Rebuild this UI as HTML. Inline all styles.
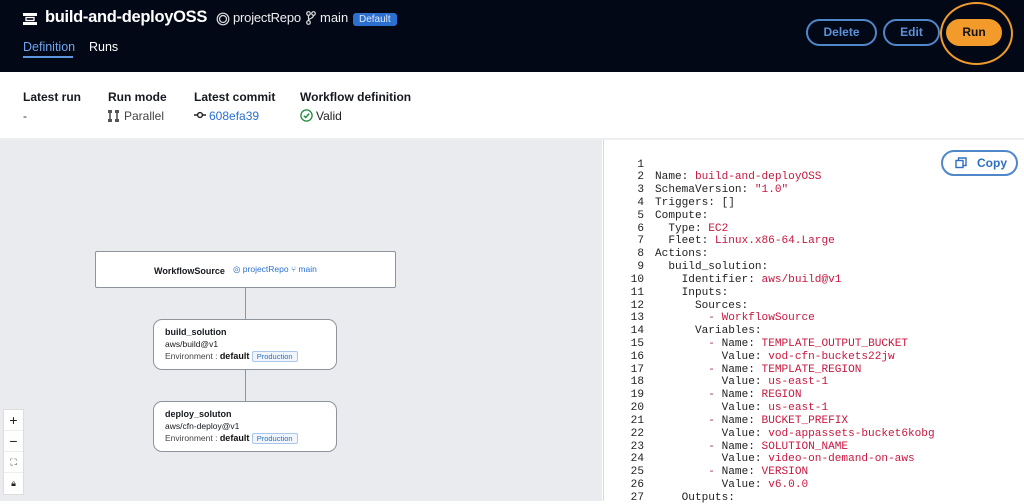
<!DOCTYPE html>
<html><head><meta charset="utf-8"><style>
*{box-sizing:border-box;margin:0;padding:0}
body{width:1024px;height:501px;overflow:hidden;font-family:"Liberation Sans",sans-serif;background:#fff;position:relative;color:#16191f}
.hdr{position:absolute;left:0;top:0;width:1024px;height:72px;background:#030817}
.abs{position:absolute;white-space:nowrap}
.btn{position:absolute;height:27px;border:2px solid #4f87c9;border-radius:14px;color:#5a93d8;font-weight:bold;font-size:12px;text-align:center;line-height:23px}
.lbl{font-weight:bold;font-size:12px}
.val{font-size:12px;color:#333}
.gray{position:absolute;left:0;top:140px;width:602px;height:361px;background:#e9ebee}
.code{position:absolute;left:603px;top:140px;width:421px;height:361px;background:#fff;border-left:1px solid #d5d9dd}
.ln{position:absolute;font-family:"Liberation Mono","Courier New",monospace;font-size:11.1px;white-space:pre;color:#222}
.r{color:#c8173f}.p{color:#9b2a7b}
.node{position:absolute;background:#fff;border:1px solid #8d949c}
.node b{font-size:9px}
.s9{font-size:8.5px}
.tag{display:inline-block;border:1px solid #a9c7ec;background:#f1f6fc;color:#2f6fc0;font-size:7.5px;padding:0 4px;line-height:9px;border-radius:2px;vertical-align:middle}
</style></head><body>
<div class="hdr">
 <svg class="abs" style="left:23px;top:13px" width="14" height="12" viewBox="0 0 14 12"><rect x="0" y="0" width="14" height="3" fill="#fff"/><rect x="0" y="9" width="14" height="3" fill="#fff"/><rect x="3" y="4.5" width="8" height="3" fill="none" stroke="#fff" stroke-width="1.3"/></svg>
 <div class="abs" style="left:45px;top:8px;color:#fff;font-size:16.5px;font-weight:bold;letter-spacing:-0.3px">build-and-deployOSS</div>
 <svg class="abs" style="left:216px;top:12px" width="14" height="14" viewBox="0 0 14 14"><circle cx="7" cy="7" r="5.8" fill="none" stroke="#ddd" stroke-width="1.2"/><circle cx="7" cy="7" r="3.5" fill="none" stroke="#ddd" stroke-width="1.2"/></svg>
 <div class="abs" style="left:233px;top:10px;color:#eee;font-size:13px;letter-spacing:-0.2px">projectRepo</div>
 <svg class="abs" style="left:306px;top:11px" width="10" height="14" viewBox="0 0 10 14"><circle cx="2.5" cy="2.5" r="1.8" fill="none" stroke="#ddd" stroke-width="1.2"/><circle cx="7.5" cy="2.5" r="1.8" fill="none" stroke="#ddd" stroke-width="1.2"/><circle cx="2.5" cy="11.5" r="1.8" fill="none" stroke="#ddd" stroke-width="1.2"/><path d="M2.5 4.3V9.7M7.5 4.3C7.5 8 2.5 7 2.5 9.7" fill="none" stroke="#ddd" stroke-width="1.2"/></svg>
 <div class="abs" style="left:320px;top:10px;color:#eee;font-size:13px">main</div>
 <div class="abs" style="left:353px;top:13px;background:#2c6fcf;color:#dce8f8;font-size:10px;padding:0 6px;line-height:13px;border-radius:3px">Default</div>
 <div class="abs" style="left:23px;top:40px;color:#6ba6ef;font-size:12.5px">Definition</div>
 <div class="abs" style="left:23px;top:56px;width:50px;height:2px;background:#5b97e0"></div>
 <div class="abs" style="left:89px;top:40px;color:#fff;font-size:12.5px">Runs</div>
 <div class="btn" style="left:806px;top:19px;width:71px">Delete</div>
 <div class="btn" style="left:883px;top:19px;width:57px">Edit</div>
 <div class="abs" style="left:940px;top:2px;width:73px;height:63px;border:2px solid #ee9b2c;border-radius:50%"></div>
 <div class="btn" style="left:946px;top:19px;width:56px;background:#f29b2b;border-color:#f29b2b;color:#111">Run</div>
</div>
<div class="abs lbl" style="left:23px;top:90px">Latest run</div>
<div class="abs val" style="left:23px;top:109px">-</div>
<div class="abs lbl" style="left:108px;top:90px">Run mode</div>
<svg class="abs" style="left:108px;top:110px" width="11" height="12" viewBox="0 0 11 12"><rect x="0" y="0" width="4" height="3" fill="#555"/><rect x="7" y="0" width="4" height="3" fill="#555"/><rect x="0" y="9" width="4" height="3" fill="#555"/><rect x="7" y="9" width="4" height="3" fill="#555"/><path d="M2 3V9M9 3V9" stroke="#555" stroke-width="1.6"/></svg>
<div class="abs val" style="left:124px;top:109px;color:#444">Parallel</div>
<div class="abs lbl" style="left:194px;top:90px">Latest commit</div>
<svg class="abs" style="left:194px;top:111px" width="12" height="8" viewBox="0 0 12 8"><circle cx="6" cy="4" r="2.4" fill="none" stroke="#222" stroke-width="1.4"/><path d="M0 4H3.6M8.4 4H12" stroke="#222" stroke-width="1.4"/></svg>
<div class="abs val" style="left:209px;top:109px;color:#2a6fd0">608efa39</div>
<div class="abs lbl" style="left:300px;top:90px">Workflow definition</div>
<svg class="abs" style="left:300px;top:109px" width="13" height="13" viewBox="0 0 13 13"><circle cx="6.5" cy="6.5" r="5.6" fill="none" stroke="#1d8a38" stroke-width="1.3"/><path d="M3.8 6.7L5.7 8.5L9.2 4.6" fill="none" stroke="#1d8a38" stroke-width="1.4"/></svg>
<div class="abs val" style="left:316px;top:109px;color:#222">Valid</div>
<div class="abs" style="left:0;top:138px;width:1024px;height:2px;background:#eceef0"></div>

<div class="gray"></div>
<div class="abs" style="left:245px;top:288px;width:1px;height:120px;background:#8d949c"></div>
<div class="node" style="left:95px;top:251px;width:301px;height:37px;border-radius:2px">
 <b class="abs" style="left:58px;top:14px">WorkflowSource</b>
 <span class="abs s9" style="left:137px;top:12px;color:#2a6fd0">◎ projectRepo ⑂ main</span>
</div>
<div class="node" style="left:153px;top:319px;width:184px;height:51px;border-radius:9px">
 <b class="abs" style="left:11px;top:7px">build_solution</b>
 <span class="abs s9" style="left:11px;top:19px">aws/build@v1</span>
 <span class="abs s9" style="left:11px;top:31px;color:#444">Environment : <b style="color:#111">default</b> <span class="tag">Production</span></span>
</div>
<div class="node" style="left:153px;top:401px;width:184px;height:51px;border-radius:9px">
 <b class="abs" style="left:11px;top:7px">deploy_soluton</b>
 <span class="abs s9" style="left:11px;top:19px">aws/cfn-deploy@v1</span>
 <span class="abs s9" style="left:11px;top:31px;color:#444">Environment : <b style="color:#111">default</b> <span class="tag">Production</span></span>
</div>
<div class="abs" style="left:3px;top:409px;width:21px;height:86px;background:#fefefe;border:1px solid #ddd;font-size:14px;text-align:center;line-height:21px;color:#222">
 <div style="height:21px;border-bottom:1px solid #eee">+</div>
 <div style="height:21px;border-bottom:1px solid #eee">−</div>
 <div style="height:21px;border-bottom:1px solid #eee;font-size:9px">⛶</div>
 <div style="height:21px;font-size:9px">🔒︎</div>
</div>

<div class="code"></div>
<div class="abs" style="left:941px;top:150px;width:77px;height:26px;border:2px solid #4f87c9;border-radius:13px;color:#2f6fc0;font-weight:bold;font-size:12px;line-height:22px;padding-left:34px">Copy</div>
<svg class="abs" style="left:955px;top:157px" width="12" height="12" viewBox="0 0 12 12"><rect x="1" y="3.5" width="7" height="7" fill="none" stroke="#2f6fc0" stroke-width="1.4"/><path d="M3.5 3.5V1H11V8.5H8" fill="none" stroke="#2f6fc0" stroke-width="1.4"/></svg>
<div id="c"></div>
<script>
var L=[
"","Name: <r>build-and-deployOSS</r>","SchemaVersion: <r>\"1.0\"</r>","Triggers: []","Compute:","  Type: <r>EC2</r>","  Fleet: <r>Linux.x86-64.Large</r>","Actions:","  build_solution:","    Identifier: <r>aws/build@v1</r>","    Inputs:","      Sources:","        <p>-</p> <r>WorkflowSource</r>","      Variables:",
"        <p>-</p> Name: <r>TEMPLATE_OUTPUT_BUCKET</r>","          Value: <r>vod-cfn-buckets22jw</r>",
"        <p>-</p> Name: <r>TEMPLATE_REGION</r>","          Value: <r>us-east-1</r>",
"        <p>-</p> Name: <r>REGION</r>","          Value: <r>us-east-1</r>",
"        <p>-</p> Name: <r>BUCKET_PREFIX</r>","          Value: <r>vod-appassets-bucket6kobg</r>",
"        <p>-</p> Name: <r>SOLUTION_NAME</r>","          Value: <r>video-on-demand-on-aws</r>",
"        <p>-</p> Name: <r>VERSION</r>","          Value: <r>v6.0.0</r>","    Outputs:"];
var h="";
for(var i=0;i<L.length;i++){var y=158.5+i*12.82;var n=String(i+1);
h+='<div class="ln" style="right:'+(1024-644)+'px;top:'+y+'px">'+n+'</div>';
h+='<div class="ln" style="left:655px;top:'+y+'px">'+L[i].replace(/<r>/g,'<span class="r">').replace(/<\/r>/g,'</span>').replace(/<p>/g,'<span class="p">').replace(/<\/p>/g,'</span>')+'</div>';}
document.getElementById('c').innerHTML=h;
</script>
</body></html>
